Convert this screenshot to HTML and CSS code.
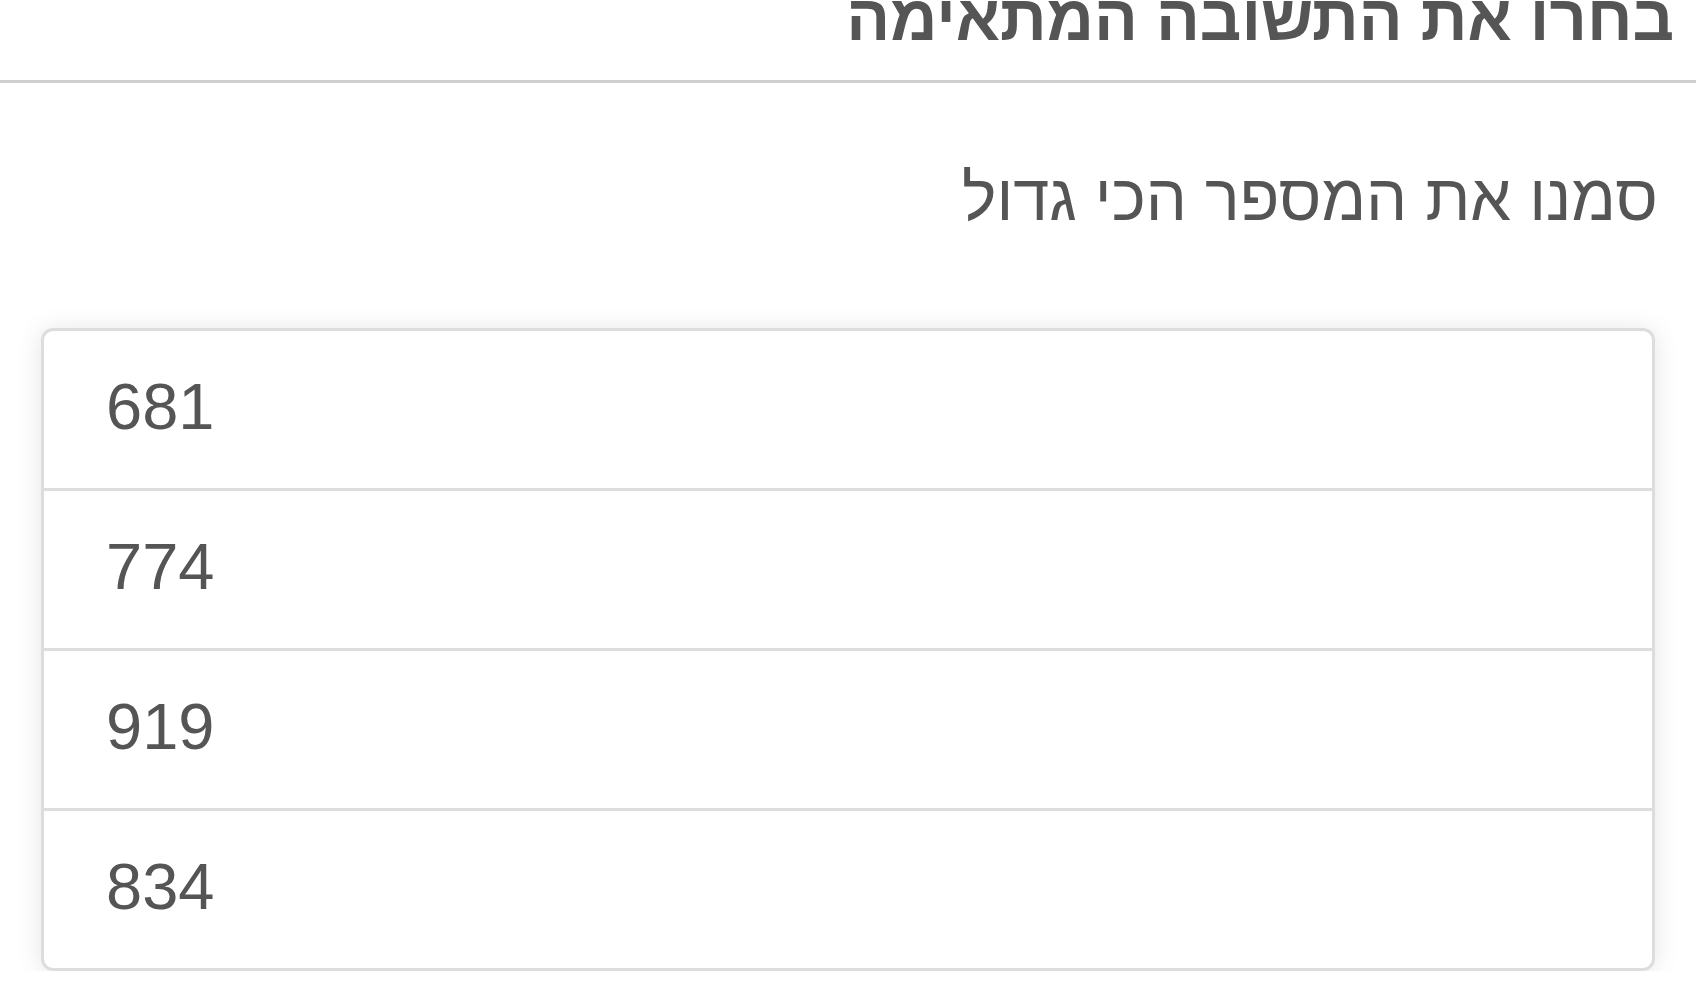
FILE: index.html
```html
<!DOCTYPE html>
<html lang="he" dir="rtl">
<head>
    <meta charset="UTF-8">
    <meta name="viewport" content="width=device-width, initial-scale=1.0">
    <title>בחרו את התשובה המתאימה</title>
    <link rel="stylesheet" href="styles.css">
</head>
<body>
    <div class="page-head">
        <h1 class="page-title">בחרו את התשובה המתאימה</h1>
    </div>

    <p class="question">סמנו את המספר הכי גדול</p>

    <div class="answers">
        <div class="answer">681</div>
        <div class="answer">774</div>
        <div class="answer">919</div>
        <div class="answer">834</div>
    </div>
</body>
</html>
```

FILE: styles.css
```css
body {
    font-family: "Liberation Sans", Arial, sans-serif;
    margin: 0;
    color: #555;
    background-color: white;
}

.page-head {
    height: 80px;
    border-bottom: 3px solid #cfcfcf;
    overflow: hidden;
}

.page-title {
    margin: -14px 22px 0 0;
    font-size: 65px;
    line-height: 64px;
    font-weight: bold;
}

.question {
    margin: 82px 38px 0 0;
    font-size: 65px;
    line-height: 65px;
}

.answers {
    margin: 98px 41px 0;
    border: 3px solid #ddd;
    border-radius: 12px;
    box-shadow: 0 2px 26px rgba(0, 0, 0, 0.11);
    direction: ltr;
}

/* each option: 157px of content plus a 3px divider above it */
.answer {
    display: flex;
    align-items: center;
    height: 151px;
    padding: 0 62px 6px;
    font-size: 65px;
}

.answer + .answer {
    border-top: 3px solid #ddd;
}
```
